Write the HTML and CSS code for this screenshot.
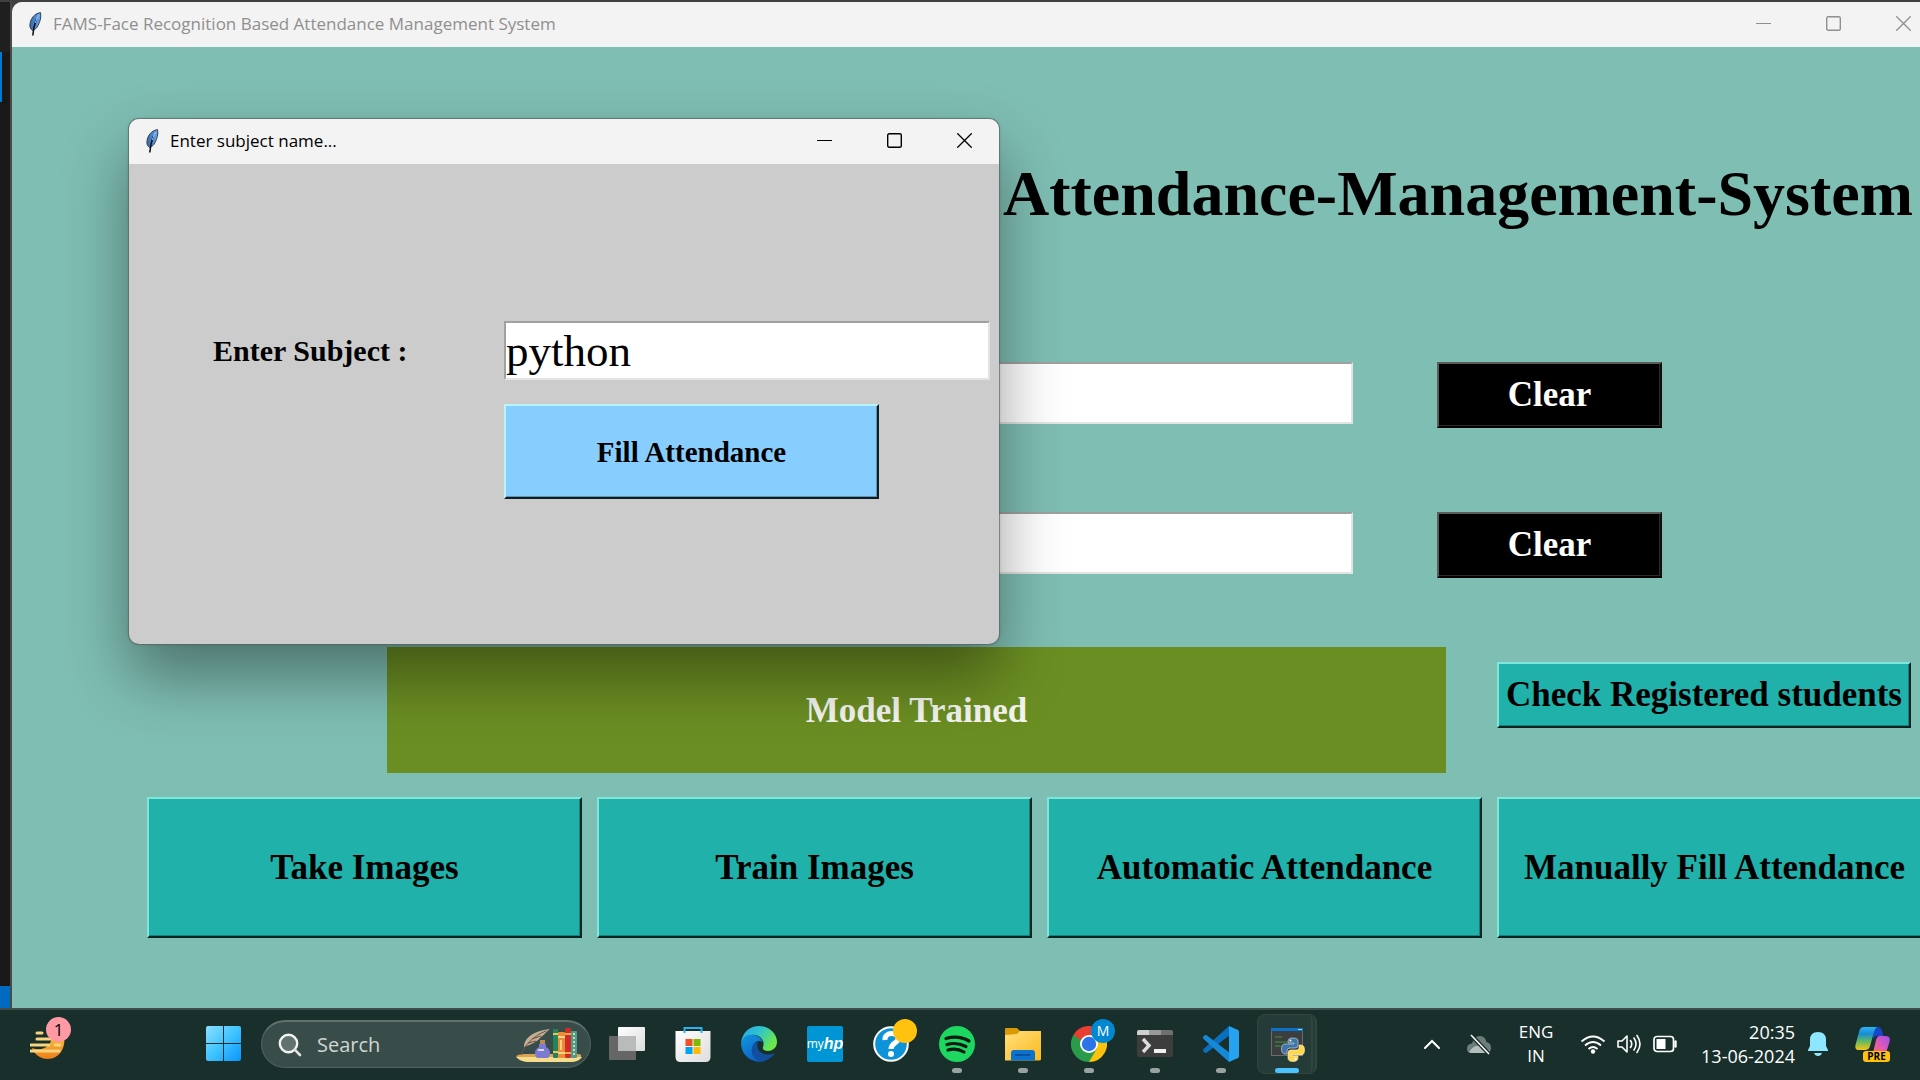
FILE: index.html
```html
<!DOCTYPE html>
<html lang="en">
<head>
<meta charset="utf-8">
<title>FAMS-Face Recognition Based Attendance Management System</title>
<link rel="stylesheet" href="styles.css">
</head>
<body>
<svg class="defs" aria-hidden="true">
  <defs>
    <linearGradient id="feather-blue" x1="0" y1="0" x2="1" y2="0"><stop offset="0" stop-color="#2f68b4"/><stop offset="1" stop-color="#6aa9f0"/></linearGradient>
    <symbol id="feather" viewBox="0 0 14 24">
      <path d="M4.500 18.500C2.500 17 1.500 15 2 12C2.500 7 6 1.500 12.500 .6C13.500 5 12 10 10 13.500C9 16 7 17.500 5.500 18Z" fill="url(#feather-blue)" stroke="#3c4048" stroke-width="1"/>
      <path d="M8.500 7C7 11 5.500 14 4.800 23.500" fill="none" stroke="#111" stroke-width="1.600"/>
      <path d="M11 3C9 6 8 8 7.500 11" fill="none" stroke="#9cc5f2" stroke-width="1"/>
    </symbol>
    <symbol id="minimize" viewBox="0 0 15 15"><path d="M0 7.500H15" stroke="currentColor" stroke-width="1"/></symbol>
    <symbol id="maximize" viewBox="0 0 15 15"><rect x=".7" y=".7" width="13.600" height="13.600" rx="1.500" fill="none" stroke="currentColor" stroke-width="1.400"/></symbol>
    <symbol id="close" viewBox="0 0 15 15"><path d="M.3.3 14.700 14.700M14.700.3.3 14.700" stroke="currentColor" stroke-width="1.300"/></symbol>
  </defs>
</svg>

<div class="desktop">
  <div class="editor-edge" aria-hidden="true">
    <div class="editor-edge-top"></div>
    <div class="editor-edge-mark"></div>
    <div class="editor-edge-status"></div>
  </div>

  <main class="window">
    <header class="titlebar titlebar-inactive">
      <svg class="feather"><use href="#feather"/></svg>
      <span class="titlebar-text">FAMS-Face Recognition Based Attendance Management System</span>
      <button class="caption" aria-label="Minimize"><svg><use href="#minimize"/></svg></button>
      <button class="caption" aria-label="Maximize"><svg><use href="#maximize"/></svg></button>
      <button class="caption" aria-label="Close"><svg><use href="#close"/></svg></button>
    </header>
    <div class="window-body">
      <h1 class="heading">Attendance-Management-System</h1>
      <form class="fields">
        <div class="field-row">
          <input class="entry field-entry" type="text" aria-label="Enrollment">
          <button class="tk-button clear" type="button">Clear</button>
        </div>
        <div class="field-row">
          <input class="entry field-entry" type="text" aria-label="Name">
          <button class="tk-button clear" type="button">Clear</button>
        </div>
      </form>
      <div class="status-row">
        <output class="status">Model Trained</output>
        <button class="tk-button check" type="button">Check Registered students</button>
      </div>
      <div class="actions">
        <button class="tk-button" type="button">Take Images</button>
        <button class="tk-button" type="button">Train Images</button>
        <button class="tk-button" type="button">Automatic Attendance</button>
        <button class="tk-button" type="button">Manually Fill Attendance</button>
      </div>
    </div>
  </main>

  <section class="dialog" role="dialog" aria-labelledby="dialog-title">
    <header class="titlebar">
      <svg class="feather"><use href="#feather"/></svg>
      <span class="titlebar-text" id="dialog-title">Enter subject name...</span>
      <button class="caption" aria-label="Minimize"><svg><use href="#minimize"/></svg></button>
      <button class="caption" aria-label="Maximize"><svg><use href="#maximize"/></svg></button>
      <button class="caption" aria-label="Close"><svg><use href="#close"/></svg></button>
    </header>
    <form class="dialog-body">
      <label class="dialog-label" for="subject">Enter Subject :</label>
      <input class="entry subject-entry" id="subject" type="text" value="python">
      <button class="tk-button fill" type="button">Fill Attendance</button>
    </form>
  </section>
</div>

<footer class="taskbar">
  <button class="widget" aria-label="Weather">
    <svg width="36" height="36" viewBox="0 0 36 36">
      <defs><linearGradient id="moon" x1="0" y1="0" x2="0" y2="1"><stop offset="0" stop-color="#fcc23c"/><stop offset="1" stop-color="#ef7d1a"/></linearGradient></defs>
      <path d="M2 22C12 26 23 20 22 8L34 11C36 22 29 33 18 33C10 33 4 28 2 22Z" fill="url(#moon)"/>
      <path d="M7 7H12M7 13H22M1 19H19M25 19H30M1 25H29" stroke="#f8d47e" stroke-width="3" stroke-linecap="round"/>
    </svg>
    <span class="widget-badge">1</span>
  </button>

  <nav class="apps" aria-label="Taskbar">
    <button class="start" aria-label="Start">
      <svg width="36" height="36" viewBox="0 0 36 36">
        <defs><linearGradient id="win" x1="0" y1="0" x2="1" y2="1"><stop offset="0" stop-color="#8be0ff"/><stop offset=".5" stop-color="#40c4ff"/><stop offset="1" stop-color="#0a93fa"/></linearGradient></defs>
        <path d="M2 0H17V17H0V2Q0 0 2 0ZM18 0H33Q35 0 35 2V17H18ZM0 18H17V35H2Q0 35 0 33ZM18 18H35V33Q35 35 33 35H18Z" fill="url(#win)"/>
      </svg>
    </button>

    <label class="search">
      <svg class="search-glass" width="24" height="24" viewBox="0 0 24 24"><circle cx="10.500" cy="10.500" r="8.700" fill="#60736f" stroke="#f2f4f3" stroke-width="2.400"/><path d="M16.700 16.700 22 22" stroke="#dfe3e2" stroke-width="2.600" stroke-linecap="round"/></svg>
      <input class="search-input" type="text" placeholder="Search" aria-label="Search">
      <svg class="search-art" width="66" height="36" viewBox="0 0 66 36">
        <path d="M0 30H66C64 33 60 35 54 35H14C7 35 3 33 0 30Z" fill="#f8dc8e"/>
        <path d="M0 29Q3 27 8 27H62Q66 27 65 30H1Z" fill="#d9a552"/>
        <path d="M8 20C8 12 16 4 34 2C30 5 29 7 25 10C21 15 14 18 8 20Z" fill="#c3ad94"/>
        <path d="M5 28C9 18 17 9 30 4M12 16 20 14M16 12 25 9" stroke="#6b5342" stroke-width="1" fill="none"/>
        <rect x="24" y="13" width="5" height="5" fill="#bd8b58"/><path d="M23 17H30V20Q34 22 34 26Q34 31 31 31H22Q19 31 19 26Q19 22 23 20Z" fill="#7b7bd1"/><path d="M22 23H28" stroke="#d5d5ff" stroke-width="2"/>
        <rect x="37" y="2" width="5" height="29" rx="1" fill="#23845b"/><path d="M37 7H42M37 25H42" stroke="#e6c561" stroke-width="2"/>
        <rect x="42" y="5" width="7" height="26" rx="1" fill="#e98e35"/><path d="M42 10H49M42 26H49M45 13V23" stroke="#fbd08a" stroke-width="2"/>
        <rect x="49" y="1" width="6" height="30" rx="1" fill="#cf2c27"/><path d="M49 7H55M49 26H55" stroke="#f2a948" stroke-width="2"/>
        <rect x="55" y="4" width="6" height="27" rx="1" fill="#4d9c8e"/><path d="M58 6V29" stroke="#d4d9a0" stroke-width="2" stroke-dasharray="2 2"/>
      </svg>
    </label>

    <button class="app" aria-label="Task view">
      <svg width="36" height="36" viewBox="0 0 36 36">
        <defs><linearGradient id="tv" x1="0" y1="0" x2="1" y2="1"><stop offset="0" stop-color="#fff"/><stop offset="1" stop-color="#dcdcdc"/></linearGradient></defs>
        <rect x="0" y="10" width="27" height="24" rx="1" fill="#666667"/><rect x="9" y="1" width="27" height="24" rx="1" fill="url(#tv)"/><path d="M9 10H27V25H9Z" fill="#b9bbba"/>
      </svg>
    </button>
    <button class="app" aria-label="Microsoft Store">
      <svg width="36" height="36" viewBox="0 0 36 36">
        <path d="M.5 5H35.500V31Q35.500 36 30.500 36H5.500Q.5 36 .5 31Z" fill="url(#tv)"/>
        <path d="M9.500 7V2H26.500V7" fill="none" stroke="#29b3ee" stroke-width="2"/>
        <path fill="#f25022" d="M10.500 13h7v7h-7z"/><path fill="#7fba00" d="M18.500 13h7v7h-7z"/><path fill="#00a4ef" d="M10.500 21h7v7h-7z"/><path fill="#ffb900" d="M18.500 21h7v7h-7z"/>
      </svg>
    </button>
    <button class="app" aria-label="Microsoft Edge">
      <svg width="36" height="36" viewBox="0 0 36 36">
        <defs>
          <linearGradient id="edge-top" x1="0" y1="0" x2="1" y2=".5"><stop offset="0" stop-color="#2aa5e2"/><stop offset=".5" stop-color="#2dc4cf"/><stop offset="1" stop-color="#6ce84a"/></linearGradient>
          <linearGradient id="edge-body" x1="0" y1="0" x2=".5" y2="1"><stop offset="0" stop-color="#1296de"/><stop offset="1" stop-color="#0b63c4"/></linearGradient>
        </defs>
        <path d="M0 17C1 7 8 0 18 0C29 0 36 8 36 16C36 22 31 25 27 25C23 25 21 23 22 21C23 19 23 14 19 11C12 6 3 10 0 17Z" fill="url(#edge-top)"/>
        <path d="M0 18C1 11 7 8 13 9C18 10 21 13 21.500 16C17 13 11 17 12 24C13 31 18 35 24 35C14 38 1 32 0 18Z" fill="url(#edge-body)"/>
        <path d="M13 18C7 25 13 37 23 35C28 34 32 30 34 27C30 29 25 29 21 27C17 25 15 21 17 16C15 16 14 17 13 18Z" fill="#124f9e"/>
      </svg>
    </button>
    <button class="app" aria-label="myHP"><span class="myhp"><span class="myhp-my">my</span><span class="myhp-hp">hp</span></span></button>
    <button class="app" aria-label="Help">
      <svg width="36" height="36" viewBox="0 0 36 36"><circle cx="18" cy="18" r="16.800" fill="#0e93d8" stroke="#fff" stroke-width="2"/><path d="M12 14C11 5 26 6 25 13C25 17 18 17 18 23" fill="none" stroke="#fff" stroke-width="5"/><circle cx="18" cy="28" r="3" fill="#fff"/></svg>
      <span class="badge badge-yellow"></span>
    </button>
    <button class="app running" aria-label="Spotify">
      <svg width="36" height="36" viewBox="0 0 36 36"><circle cx="18" cy="18" r="18" fill="#1ed760"/><path d="M7 12.500C14 10.500 23 11 30 15M8 18.500C15 16.500 21 17.500 27 20.500M9 24C14 22.500 20 23 25 26" fill="none" stroke="#0b1a12" stroke-width="3.200" stroke-linecap="round"/></svg>
    </button>
    <button class="app running" aria-label="File Explorer">
      <svg width="36" height="36" viewBox="0 0 36 36">
        <defs><linearGradient id="folder" x1="0" y1="0" x2="1" y2="1"><stop offset="0" stop-color="#ffe07c"/><stop offset="1" stop-color="#fbb91f"/></linearGradient></defs>
        <path d="M0 3Q0 2 1 2H12L15 5V9H0Z" fill="#d99a05"/><path d="M0 9L12 8L15 5H36V33Q36 34.500 34.500 34.500H0Z" fill="url(#folder)"/><path d="M6 34.500V27Q6 24 9 24H27Q30 24 30 27V34.500Z" fill="#0c73cc"/><path d="M10 29H25" stroke="#064b93" stroke-width="1.600"/>
      </svg>
    </button>
    <button class="app running" aria-label="Google Chrome">
      <svg width="36" height="36" viewBox="0 0 36 36">
        <path d="M18 18 2.400 9A18 18 0 0 1 33.600 9Z" fill="#e93e31"/><path d="M18 18 33.600 9A18 18 0 0 1 18 36Z" fill="#fcc20d"/><path d="M18 18V36A18 18 0 0 1 2.400 9Z" fill="#2a9b4a"/>
        <path d="M18 9H33.600L26 22Z" fill="#fcc20d"/><path d="M25.800 22.500 18 36 10.500 22.500Z" fill="#2a9b4a"/><path d="M10 22.500 2.400 9.100 18 9Z" fill="#2a9b4a"/><path d="M2.400 9H18V10L10 14Z" fill="#e93e31"/>
        <circle cx="18" cy="18" r="9" fill="#fff"/><circle cx="18" cy="18" r="7.200" fill="#2b73e8"/>
      </svg>
      <span class="badge badge-blue">M</span>
    </button>
    <button class="app running" aria-label="Terminal">
      <svg width="36" height="36" viewBox="0 0 36 36"><rect y="4" width="36" height="27" rx="2" fill="#3d3d3d"/><path d="M0 9V6Q0 4 2 4H12V9Z" fill="#cfcfcf"/><path d="M12 4H24V9H12Z" fill="#999"/><path d="M24 4H34Q36 4 36 6V9H24Z" fill="#707070"/><path d="M6 13 12 19.500 6 26" fill="none" stroke="#dcdcdc" stroke-width="3.400"/><rect x="17" y="23" width="12" height="4" fill="#f0f0f0"/></svg>
    </button>
    <button class="app running" aria-label="Visual Studio Code">
      <svg width="36" height="36" viewBox="0 0 36 36">
        <path d="M26 0 0 23.500Q-.3 25 1 26.200L3 27.200 27 9Z" fill="#0a6fbe"/><path d="M26 36 0 12.500Q-.3 11 1 9.800L3 8.800 27 27Z" fill="#1588d8"/><path d="M26 0 35 4Q36 4.500 36 6V30Q36 31.500 35 32L26 36Z" fill="#25a3f1"/>
      </svg>
    </button>
    <button class="app active" aria-label="Python">
      <svg width="36" height="36" viewBox="0 0 36 36">
        <rect x="2.500" y="2.500" width="31" height="27" fill="#3c3d3e" stroke="#6b6b6b"/><path d="M2 2H34V5H2Z" fill="#0b72c9"/><path d="M29 3.500H33" stroke="#9bd1f7"/><path d="M6 11H13M6 16H18M6 20H12" stroke="#379a3a" stroke-width="1.200"/>
        <path d="M24 12C19 12 19 14 19 17H25V18H16Q12.500 18 12.500 23Q12.500 28 16 28H18V25Q18 22 21 22H26Q29 22 29 19V15Q29 12 24 12Z" fill="#3d76a9" stroke="#dfe6ea" stroke-width=".6"/>
        <path d="M24 35.500C29 35.500 29 33 29 30H23V29H32Q35.500 29 35.500 24Q35.500 19 32 19H30V22Q30 24 27 24H22Q19 24 19 27V32Q19 35.500 24 35.500Z" fill="#ffd84a" stroke="#f2f2f2" stroke-width=".6"/>
        <circle cx="21.500" cy="14.500" r="1" fill="#fff"/><circle cx="26.500" cy="33" r="1" fill="#fff"/>
      </svg>
    </button>
  </nav>

  <div class="tray">
    <button class="tray-icon" aria-label="Hidden icons"><svg width="18" height="12" viewBox="0 0 18 12"><path d="M2 10 9 3 16 10" fill="none" stroke="#fff" stroke-width="2" stroke-linecap="round"/></svg></button>
    <button class="tray-icon tray-cloud" aria-label="OneDrive"><svg width="26" height="22" viewBox="0 0 26 22"><path d="M5 20Q1 20 1 15.500Q1 11 6 10.500Q8 3 14 3Q19 3 20.500 9Q25 10 25 15Q25 20 20 20Z" fill="#6d7d7a"/><path d="M3 19Q9 10 16 14T24 18Q23 20 20 20H5Z" fill="#b3bdbb"/><path d="M5 2 23 21" stroke="#182f2b" stroke-width="4"/><path d="M5 2 23 21" stroke="#fff" stroke-width="1.500"/></svg></button>
    <button class="tray-text language"><span>ENG</span><span>IN</span></button>
    <button class="system" aria-label="Network, volume and battery">
      <svg width="26" height="22" viewBox="0 0 26 22"><path d="M1.500 8.500Q13-1.500 24.500 8.500M5 12.500Q13 5.500 21 12.500M8.500 16Q13 12 17.500 16" fill="none" stroke="#fff" stroke-width="1.800"/><circle cx="13" cy="18.500" r="2.200" fill="#fff"/></svg>
      <svg width="26" height="22" viewBox="0 0 26 22"><path d="M2 8H6L11 3V19L6 14H2Z" fill="none" stroke="#fff" stroke-width="1.600" stroke-linejoin="round"/><path d="M14.500 7.500Q17 11 14.500 14.500M18 5Q22 11 18 17M21 2.500Q27 11 21 19.500" fill="none" stroke="#fff" stroke-width="1.600" stroke-linecap="round"/></svg>
      <svg width="26" height="22" viewBox="0 0 26 22"><rect x="2" y="3.500" width="19.500" height="15" rx="3" fill="none" stroke="#fff" stroke-width="1.700"/><rect x="4.500" y="6" width="9" height="10" fill="#fff"/><path d="M23.500 8.500V13.500" stroke="#fff" stroke-width="2.400" stroke-linecap="round"/></svg>
    </button>
    <button class="tray-text clock"><span>20:35</span><span>13-06-2024</span></button>
    <button class="tray-icon" aria-label="Notifications"><svg width="20" height="24" viewBox="0 0 20 24"><path d="M10 0Q18 0 18 8V14L20 18V19H0V18L2 14V8Q2 0 10 0Z" fill="#8fe6ff"/><path d="M6 21H14Q13 24 10 24T6 21Z" fill="#8fe6ff"/></svg></button>
    <button class="copilot" aria-label="Copilot">
      <svg width="36" height="36" viewBox="0 0 36 36">
        <defs>
          <linearGradient id="cp-a" x1="0" y1="0" x2="0" y2="1"><stop offset="0" stop-color="#2bb5f5"/><stop offset=".3" stop-color="#178bd6"/><stop offset=".6" stop-color="#5cb768"/><stop offset="1" stop-color="#f5c518"/></linearGradient>
          <linearGradient id="cp-b" x1="1" y1="0" x2="0" y2="1"><stop offset="0" stop-color="#a34df0"/><stop offset=".5" stop-color="#e55cab"/><stop offset="1" stop-color="#ff7a3c"/></linearGradient>
        </defs>
        <path d="M18 1H23Q26 1 27 5L28.500 10H22Q19 10 18 14Z" fill="#1746c8"/>
        <path d="M9 1H22Q20 2 19 6L15 20Q14 24 10 24H4Q-.5 24 .5 19L4 6Q5 1 9 1Z" fill="url(#cp-a)"/>
        <path d="M25 10H31Q36 10 34.500 16L31 27Q30 32 25 32H14Q17 31 18 27L21 14Q22 10 25 10Z" fill="url(#cp-b)"/>
      </svg>
      <span class="copilot-tag">PRE</span>
    </button>
  </div>
</footer>
</body>
</html>
```

FILE: styles.css
```css
* {
  box-sizing: border-box;
}

body {
  margin: 0;
  min-height: 100vh;
  display: flex;
  flex-direction: column;
  overflow: hidden;
  background: #1f1f1f;
  font-family: "Open Sans", "Noto Sans", sans-serif;
}

button {
  margin: 0;
  padding: 0;
  border: 0;
  background: none;
  color: inherit;
  font: inherit;
}

svg {
  display: block;
  flex: none;
}

.defs {
  position: absolute;
  width: 0;
  height: 0;
}

/* Desktop and windows */

.desktop {
  position: relative;
  flex: 1;
  display: flex;
  padding-top: 2px;
  background: #404040;
}

.editor-edge {
  width: 12px;
  flex: none;
  display: flex;
  flex-direction: column;
  border-right: 2px solid #4a4a4a;
  background: #181818;
}

.editor-edge-top {
  height: 50px;
  background: #1f1f1f;
}

.editor-edge-mark {
  width: 2px;
  height: 50px;
  background: #0078d4;
}

.editor-edge-status {
  height: 22px;
  margin-top: auto;
  background: #0069c0;
}

.window {
  flex: 1;
  min-width: 0;
  display: flex;
  flex-direction: column;
  overflow: hidden;
  border-top-left-radius: 10px;
  background: #7fbeb3;
}

.titlebar {
  height: 45px;
  flex: none;
  display: flex;
  align-items: center;
  padding: 0 0 2px 16px;
  background: #f3f3f3;
  color: #000;
}

.titlebar-inactive {
  margin-right: -18px;
  color: #8f8f8f;
}

.feather {
  width: 14px;
  height: 24px;
}

.titlebar-text {
  flex: 1;
  margin-left: 11px;
  font-size: 17px;
  line-height: 24px;
  white-space: nowrap;
}

.caption {
  width: 70px;
  height: 43px;
  display: flex;
  align-items: center;
  justify-content: center;
}

.caption svg {
  width: 15px;
  height: 15px;
}

.window-body {
  display: flex;
  flex-direction: column;
  padding-top: 111px;
  font-family: "Liberation Serif", "Times New Roman", serif;
}

.heading {
  margin: 0;
  padding-right: 7px;
  text-align: right;
  font-size: 64px;
  line-height: 72px;
  white-space: nowrap;
}

.fields {
  display: flex;
  flex-direction: column;
  gap: 84px;
  margin-top: 132px;
}

.field-row {
  display: flex;
  align-items: flex-start;
  justify-content: flex-end;
  gap: 84px;
  padding-right: 258px;
}

.entry {
  border: 2px solid;
  border-color: #a0a0a0 #e3e3e3 #e3e3e3 #a0a0a0;
  padding: 0;
  background: #fff;
  color: #000;
  font-family: "Liberation Serif", "Times New Roman", serif;
  font-size: 45px;
  outline: 0;
}

.field-entry {
  flex: 0 1 680px;
  min-width: 0;
  height: 62px;
}

.tk-button {
  border: 2px solid;
  border-color: #7fe6dc #0a2422 #0a2422 #7fe6dc;
  box-shadow: inset -1px -1px #16807a;
  background: #20b2aa;
  color: #000;
  font-family: "Liberation Serif", "Times New Roman", serif;
  font-size: 35px;
  font-weight: bold;
  line-height: 40px;
  white-space: nowrap;
}

.clear {
  width: 225px;
  height: 66px;
  border-color: #5c5c5c #101010 #000 #5c5c5c;
  box-shadow: inset -1px -1px #2c2c2c;
  background: #000;
  color: #fff;
}

.status-row {
  display: flex;
  align-items: flex-start;
  gap: 51px;
  margin-top: 69px;
  padding: 0 9px 0 375px;
}

.status {
  flex: 1;
  height: 126px;
  display: flex;
  align-items: center;
  justify-content: center;
  padding-top: 2px;
  background: #6b8e23;
  color: #f5f5f0;
  font-size: 35px;
  font-weight: bold;
  line-height: 40px;
}

.check {
  width: 414px;
  height: 66px;
  margin-top: 15px;
}

.actions {
  display: grid;
  grid-template-columns: repeat(4, 1fr);
  grid-auto-rows: 141px;
  gap: 15px;
  margin: 24px -12px 0 135px;
}

.dialog {
  position: absolute;
  left: 129px;
  top: 119px;
  width: 870px;
  overflow: hidden;
  border-radius: 10px;
  background: #ccc;
  box-shadow: 0 0 0 1px rgba(90, 105, 100, .65), 0 0 3px rgba(0, 0, 0, .3), 0 32px 64px rgba(0, 0, 0, .4);
}

.dialog-body {
  height: 480px;
  display: grid;
  grid-template-columns: 291px 486px;
  grid-template-rows: 59px 95px;
  gap: 24px 0;
  align-items: center;
  padding: 157px 0 0 84px;
  font-family: "Liberation Serif", "Times New Roman", serif;
}

.dialog-label {
  font-size: 30px;
  font-weight: bold;
  line-height: 36px;
}

.subject-entry {
  height: 59px;
  min-width: 0;
}

.fill {
  grid-column: 2;
  width: 375px;
  height: 95px;
  border-color: #b8f4fb #101c22 #101c22 #b8f4fb;
  box-shadow: inset -1px -1px #5c94ba;
  background: #87ceff;
  font-size: 29px;
}

/* Taskbar */

.taskbar {
  height: 72px;
  flex: none;
  display: flex;
  align-items: center;
  padding: 0 29px 2px 30px;
  border-top: 2px solid #3f4d4a;
  background: #182f2b;
  color: #fff;
}

.widget {
  position: relative;
  width: 40px;
  height: 36px;
}

.widget-badge {
  position: absolute;
  left: 16px;
  top: -9px;
  width: 25px;
  height: 25px;
  border-radius: 50%;
  background: #ff99a4;
  color: #000;
  font-size: 17px;
  line-height: 25px;
}

.apps {
  display: flex;
  align-items: center;
  margin-left: 136px;
}

.search {
  width: 330px;
  height: 48px;
  display: flex;
  align-items: center;
  margin: 0 3px 0 19px;
  padding: 0 8px 0 16px;
  border: 1px solid #50625e;
  border-top: 2px solid #61716e;
  border-radius: 24px;
  background: #384d49;
}

.search-input {
  flex: 1;
  min-width: 0;
  margin-left: 15px;
  padding: 0;
  border: 0;
  background: none;
  color: #fff;
  font-family: inherit;
  font-size: 20px;
  outline: 0;
}

.search-input::placeholder {
  color: #d0d6d4;
  opacity: 1;
}

.app {
  position: relative;
  width: 66px;
  height: 60px;
  display: flex;
  align-items: center;
  justify-content: center;
}

.running::after,
.active::after {
  content: "";
  position: absolute;
  left: 28px;
  bottom: 1px;
  width: 10px;
  height: 5px;
  border-radius: 3px;
  background: #98a3a1;
}

.active::before {
  content: "";
  position: absolute;
  inset: 0 3px;
  border: 1px solid #32463f;
  border-right: 6px double #32463f;
  border-radius: 8px;
  background: rgba(255, 255, 255, .06);
}

.active::after {
  left: 21px;
  width: 24px;
  background: #4cc2ff;
}

.active svg {
  position: relative;
}

.myhp {
  width: 36px;
  height: 36px;
  display: flex;
  align-items: center;
  justify-content: center;
  border-radius: 2px;
  background: #0096d6;
  line-height: 36px;
}

.myhp-my {
  font-size: 12px;
}

.myhp-hp {
  font-family: "Liberation Sans", Arial, sans-serif;
  font-size: 16px;
  font-style: italic;
  font-weight: bold;
}

.badge {
  position: absolute;
  left: 35px;
  top: 5px;
  width: 24px;
  height: 24px;
  border-radius: 50%;
  font-size: 14px;
  line-height: 24px;
}

.badge-yellow {
  background: #ffc20e;
}

.badge-blue {
  background: #0288d1;
}

.tray {
  display: flex;
  align-items: center;
  margin-left: auto;
}

.tray-cloud {
  margin-left: 25px;
}

.tray-text {
  display: flex;
  flex-direction: column;
  font-size: 17px;
  line-height: 24px;
}

.language {
  width: 64px;
  margin-left: 12px;
  align-items: center;
}

.system {
  display: flex;
  gap: 10px;
  margin-left: 12px;
}

.clock {
  width: 104px;
  margin-left: 13px;
  margin-right: 13px;
  align-items: flex-end;
  font-size: 18px;
}

.copilot {
  position: relative;
  margin-left: 27px;
}

.copilot-tag {
  position: absolute;
  left: 8px;
  bottom: 0;
  width: 27px;
  height: 11px;
  border-radius: 3px;
  background: #ffc20e;
  color: #000;
  font-size: 10px;
  font-weight: bold;
  line-height: 11px;
}
```
